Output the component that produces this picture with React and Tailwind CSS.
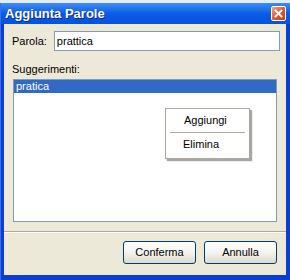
import React from "react";

function CloseButton() {
  return (
    <div className="w-[15px] h-[15px] rounded-[2px] border border-white bg-gradient-to-br from-[#f2a484] via-[#e15a2c] to-[#c23c12] flex items-center justify-center">
      <svg width="9" height="9" viewBox="0 0 9 9">
        <path d="M1.5 1.5 L7.5 7.5 M7.5 1.5 L1.5 7.5" stroke="white" strokeWidth="1.9" strokeLinecap="square" />
      </svg>
    </div>
  );
}

function XpButton({ label }) {
  return (
    <button className="w-[73px] h-[23px] rounded-[3px] border border-[#003c74] bg-gradient-to-b from-white via-[#f4f3ee] to-[#dcd9cd] text-[11px] text-black">
      {label}
    </button>
  );
}

export default function App() {
  return (
    <div className="w-[290px] h-[280px] bg-[#e3ebf8] pt-[3px] font-['Liberation_Sans',sans-serif]">
      <div className="h-[277px] flex flex-col bg-[#0b3fd0] border-l border-[#3a6ee8]">
        {/* TITLE BAR */}
        <div className="h-[21px] flex items-center justify-between pl-[4px] pr-[4px] bg-gradient-to-b from-[#3d8cf7] via-[#0a5ce6] to-[#0553dc]">
          <span className="text-white font-bold text-[13px] leading-none [text-shadow:1px_1px_0_#0a2a8a]">
            Aggiunta Parole
          </span>
          <CloseButton />
        </div>

        {/* BODY */}
        <div className="flex-1 flex flex-col ml-[3px] mr-[4px] mb-[5px] bg-[#ece9d8] text-[11px] text-black">
          <div className="flex items-center gap-[7px] pl-[8px] pr-[6px] pt-[7px]">
            <span>Parola:</span>
            <div className="flex-1 h-[20px] bg-white border border-[#7f9db9] flex items-center pl-[2px]">
              prattica
            </div>
          </div>

          <div className="pl-[8px] mt-[12px] leading-[13px]">Suggerimenti:</div>

          <div className="relative mx-[9px] mt-[3px] h-[143px] bg-white border border-[#7f9db9]">
            <div className="h-[13px] bg-[#316ac5] text-white leading-[13px] pl-[2px]">pratica</div>

            {/* CONTEXT MENU */}
            <div className="absolute left-[151px] top-[28px] w-[85px] h-[51px] bg-white border border-[#aca899] shadow-[2px_2px_1px_rgba(0,0,0,0.35)] flex flex-col pt-[1px]">
              <div className="h-[21px] flex items-center pl-[18px]">Aggiungi</div>
              <div className="mx-[4px] border-t border-[#aca899] my-[1px]" />
              <div className="h-[21px] flex items-center pl-[17px]">Elimina</div>
            </div>
          </div>

          <div className="mt-[9px] border-t border-[#aca899]" />
          <div className="border-t border-white" />

          <div className="flex justify-end gap-[8px] pr-[9px] pt-[8px]">
            <XpButton label="Conferma" />
            <XpButton label="Annulla" />
          </div>
        </div>
      </div>
    </div>
  );
}
